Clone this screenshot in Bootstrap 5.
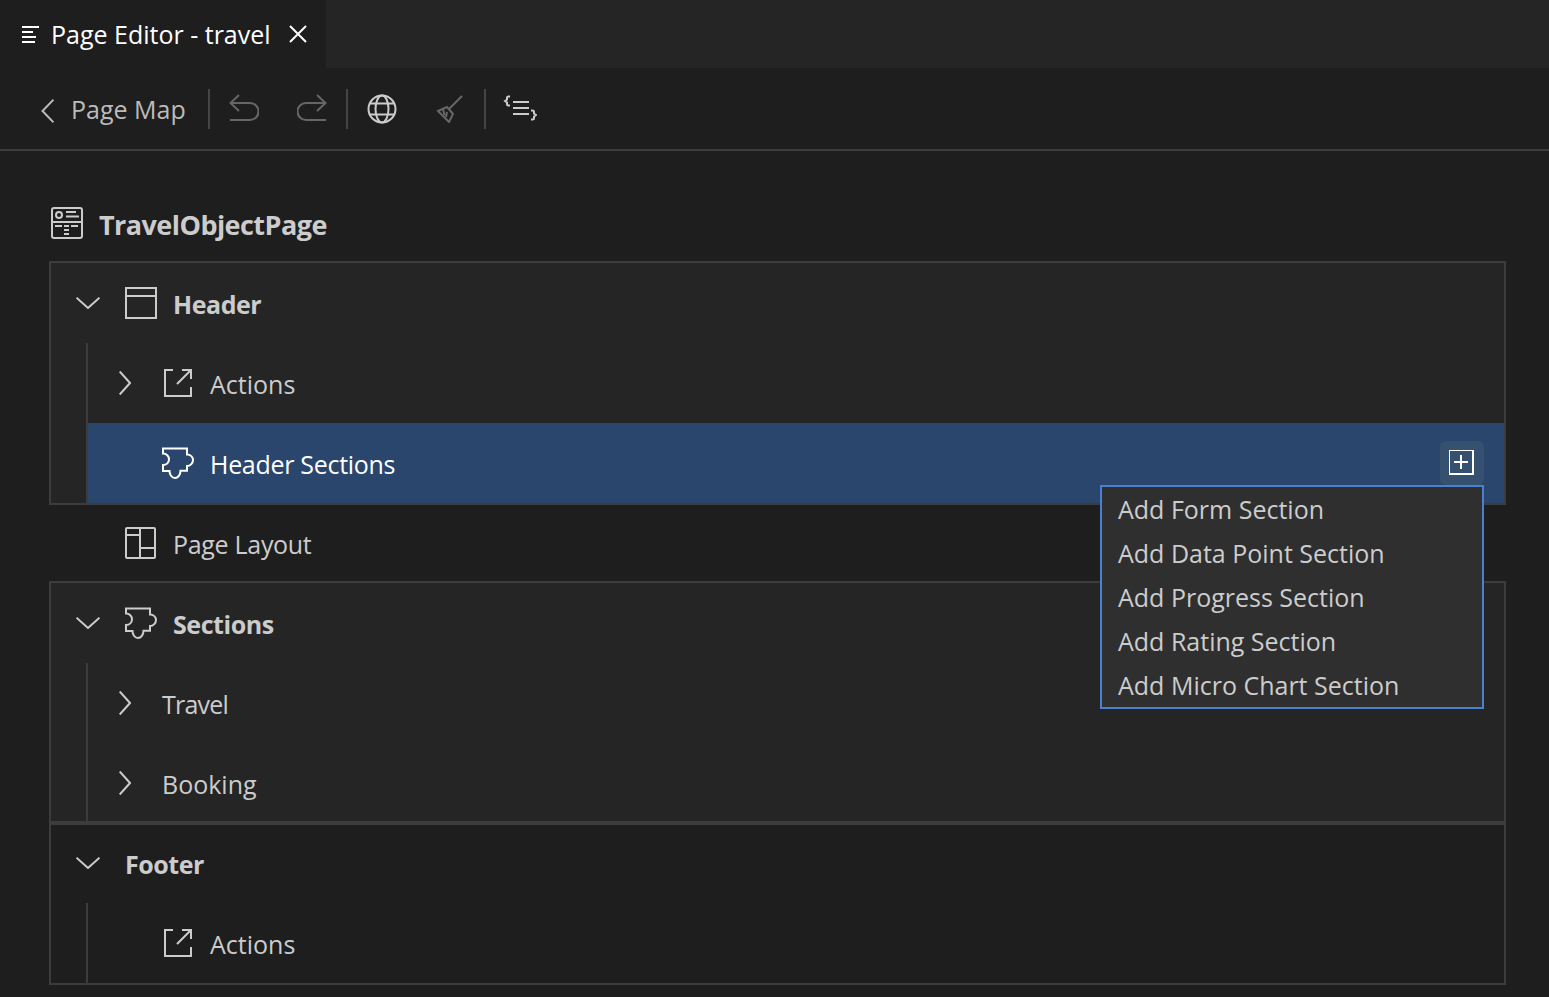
<!DOCTYPE html>
<html lang="en">

<head>
    <meta charset="UTF-8">
    <meta name="viewport" content="width=device-width, initial-scale=1.0">
    <link rel="stylesheet" href="https://cdn.jsdelivr.net/npm/bootstrap@5.3.1/dist/css/bootstrap.min.css">
    <script src="https://cdn.jsdelivr.net/npm/bootstrap@5.3.1/dist/js/bootstrap.bundle.min.js"></script>
    <title>Page Editor - travel</title>
    <style>
        body {
            background-color: #1e1e1e;
            color: #cccccc;
            font-family: "Open Sans", "Noto Sans", sans-serif;
            font-size: 25px;
            height: 997px;
            overflow: hidden;
        }

        svg {
            display: block;
            flex: none;
            fill: none;
            stroke: currentColor;
            stroke-width: 2;
        }

        .tab-strip {
            height: 68px;
            background-color: #252526;
        }

        .editor-tab {
            width: 326px;
            background-color: #1e1e1e;
            color: #ffffff;
            padding-left: 22px;
        }

        .tab-name {
            margin-left: 12px;
            padding-top: 2px;
        }

        .tab-close {
            margin-left: 18px;
        }

        .tool-strip {
            height: 83px;
            border-bottom: 2px solid #3c3c3c;
            padding-top: 21px;
            padding-bottom: 20px;
        }

        .back-link {
            width: 208px;
            padding-left: 41px;
            color: #bbbbbb;
        }

        .back-link svg {
            margin-top: 4px;
            margin-right: 17px;
        }

        .back-link span {
            padding-top: 2px;
        }

        .tool-sep {
            width: 2px;
            background-color: #454545;
        }

        .tool-btn {
            width: 68px;
            color: #cccccc;
        }

        .tool-btn.off {
            color: #666666;
        }

        .page-title {
            height: 64px;
            margin: 40px 43px 6px 51px;
            font-size: 27px;
            font-weight: 700;
            letter-spacing: -0.55px;
        }

        .page-title span {
            padding-top: 4px;
        }

        .tree-box {
            margin: 0 43px 0 49px;
            border: 2px solid #3c3c3c;
            background-color: #252526;
        }

        .tree-box.plain {
            background-color: #1e1e1e;
        }

        .tree-kids {
            margin-left: 35px;
            border-left: 2px solid #3c3c3c;
        }

        .tree-row {
            height: 80px;
        }

        .tree-row span {
            padding-top: 4px;
        }

        .tree-row.tail-row {
            height: 78px;
            padding-top: 2px;
        }

        .tree-row.first-row {
            height: 78px;
            padding-bottom: 2px;
        }

        .tree-row.layout-row {
            height: 76px;
            margin: 0 43px 0 51px;
            padding-left: 74px;
        }

        .top-row {
            padding-left: 25px;
        }

        .kid-row {
            padding-left: 31px;
        }

        .kid-row.selected {
            position: relative;
            background-color: #2a466c;
            color: #ffffff;
        }

        .bold-label {
            font-weight: 700;
            letter-spacing: -0.45px;
        }

        .snug-label {
            letter-spacing: -0.3px;
        }

        .tight-label {
            letter-spacing: -0.8px;
        }

        .twist-down {
            margin-right: 25px;
        }

        .twist-right {
            margin-right: 31px;
        }

        .twist-none {
            width: 43px;
        }

        .row-icon {
            margin-right: 16px;
        }

        .puzzle-icon {
            margin-right: 14px;
        }

        .add-btn {
            width: 44px;
            height: 44px;
            margin-right: 20px;
            border-radius: 6px;
            background-color: #36506f;
        }

        .add-menu {
            position: absolute;
            top: 62px;
            right: 20px;
            z-index: 5;
            width: 384px;
            height: 224px;
            padding-left: 16px;
            border: 2px solid #4a7fd1;
            background-color: #2f2f2f;
            color: #cccccc;
        }

        .add-menu div {
            height: 44px;
            padding-top: 2px;
        }
    </style>
</head>

<body>
    <svg width="0" height="0" class="position-absolute">
        <symbol id="chev-down" viewBox="0 0 24 12"><path d="M0.5 0.7 12 11 23.5 0.7" /></symbol>
        <symbol id="chev-right" viewBox="0 0 12 24"><path d="M0.7 0.5 11 12 0.7 23.5" /></symbol>
        <symbol id="ext-box" viewBox="0 0 32 32">
            <path d="M11 3H3v26h26v-9" />
            <path d="M15 17 29 3M20 3h9v9" />
        </symbol>
        <symbol id="puzzle" viewBox="0 0 34 34">
            <path d="M1 2.500H25v6c3.500 0 6 2.500 6 5.500s-2.500 6-6 6v4.700h-6.500c0 4-2.500 7.300-5.500 7.300s-5.500-3-5.500-7H1V19c3.500 0 6-2.500 6-5.700S4.500 7.500 1 7.500z" />
        </symbol>
    </svg>

    <div class="tab-strip d-flex">
        <div class="editor-tab d-flex align-items-center">
            <svg width="17" height="18" viewBox="0 0 17 18">
                <path d="M0 2h17M0 7h11M0 12h14M0 17h13" />
            </svg>
            <span class="tab-name">Page Editor - travel</span>
            <svg width="18" height="18" viewBox="0 0 18 18" class="tab-close">
                <path d="M1 1l16 16M17 1 1 17" />
            </svg>
        </div>
    </div>

    <div class="tool-strip d-flex">
        <div class="back-link d-flex align-items-center">
            <svg width="13" height="24" viewBox="0 0 13 24">
                <path d="M12.500 0.700 1.500 12l11 11.300" />
            </svg>
            <span>Page Map</span>
        </div>
        <div class="tool-sep"></div>
        <div class="tool-btn off d-flex align-items-center justify-content-center">
            <svg width="30" height="30" viewBox="0 0 30 30">
                <path d="M10 1 1.500 9 10 17M1.500 9H21a7.500 7.500 0 0 1 0 17H1" />
            </svg>
        </div>
        <div class="tool-btn off d-flex align-items-center justify-content-center">
            <svg width="30" height="30" viewBox="0 0 30 30">
                <path d="M20 1l8.500 8L20 17M28.500 9H9a7.500 7.500 0 0 0 0 17h20" />
            </svg>
        </div>
        <div class="tool-sep"></div>
        <div class="tool-btn d-flex align-items-center justify-content-center">
            <svg width="30" height="30" viewBox="0 0 30 30">
                <circle cx="15" cy="15" r="13.500" />
                <ellipse cx="15" cy="15" rx="6.500" ry="13.500" />
                <path d="M3 9.500h24M3 20.500h24" />
            </svg>
        </div>
        <div class="tool-btn off d-flex align-items-center justify-content-center">
            <svg width="28" height="28" viewBox="0 0 28 28">
                <path d="M26 1 13 14" />
                <path d="M2 16l9-4 6 7-4 8zM7 14l1.500 6M11 17l-1 5" />
            </svg>
        </div>
        <div class="tool-sep"></div>
        <div class="tool-btn d-flex align-items-center justify-content-center">
            <svg width="34" height="28" viewBox="0 0 34 28">
                <path d="M10 7h16M10 13h16M10 19h16" />
                <path d="M7 1.500H5.500Q4 1.500 4 3v1.500L2 6l2 1.500V9q0 1.500 1.500 1.500H7M28 15.500h1.500Q31 15.500 31 17v1.500l2 1.500-2 1.500V23q0 1.500-1.500 1.500H28" />
            </svg>
        </div>
    </div>

    <div class="page-title d-flex align-items-center">
        <svg width="32" height="32" viewBox="0 0 32 32" class="me-3">
            <rect x="1" y="1" width="30" height="30" rx="2" />
            <circle cx="8" cy="8" r="3" />
            <path d="M15 5h10M15 9.500h13M1 15h30M4 19h7M13 19h5M20 19h7M13 23h5M13 27h5" />
        </svg>
        <span>TravelObjectPage</span>
    </div>

    <div class="tree-box">
        <div class="tree-row top-row d-flex align-items-center">
            <svg width="24" height="12" class="twist-down"><use href="#chev-down" /></svg>
            <svg width="32" height="32" viewBox="0 0 32 32" class="row-icon">
                <path d="M1 1h30v30H1zM1 9h30" />
            </svg>
            <span class="bold-label">Header</span>
        </div>
        <div class="tree-kids">
            <div class="tree-row kid-row d-flex align-items-center">
                <svg width="12" height="24" class="twist-right"><use href="#chev-right" /></svg>
                <svg width="32" height="32" class="row-icon"><use href="#ext-box" /></svg>
                <span>Actions</span>
            </div>
            <div class="tree-row kid-row selected d-flex align-items-center">
                <div class="twist-none"></div>
                <svg width="34" height="34" class="puzzle-icon"><use href="#puzzle" /></svg>
                <span class="snug-label">Header Sections</span>
                <div class="add-btn ms-auto d-flex align-items-center justify-content-center">
                    <svg width="26" height="26" viewBox="1 1 26 26" class="text-white">
                        <path d="M1 1h24v24H1zM13 6v14M6 13h14" />
                    </svg>
                </div>
                <div class="add-menu">
                    <div class="d-flex align-items-center">Add Form Section</div>
                    <div class="d-flex align-items-center">Add Data Point Section</div>
                    <div class="d-flex align-items-center">Add Progress Section</div>
                    <div class="d-flex align-items-center">Add Rating Section</div>
                    <div class="d-flex align-items-center">Add Micro Chart Section</div>
                </div>
            </div>
        </div>
    </div>

    <div class="tree-row layout-row d-flex align-items-center">
        <svg width="32" height="32" viewBox="0 0 32 32" class="row-icon">
            <rect x="1" y="1" width="29" height="30" rx="1" />
            <path d="M15 1v30M1 8h14M15 21h15" />
        </svg>
        <span class="snug-label">Page Layout</span>
    </div>

    <div class="tree-box">
        <div class="tree-row top-row d-flex align-items-center">
            <svg width="24" height="12" class="twist-down"><use href="#chev-down" /></svg>
            <svg width="34" height="34" class="puzzle-icon"><use href="#puzzle" /></svg>
            <span class="bold-label">Sections</span>
        </div>
        <div class="tree-kids">
            <div class="tree-row kid-row d-flex align-items-center">
                <svg width="12" height="24" class="twist-right"><use href="#chev-right" /></svg>
                <span class="tight-label">Travel</span>
            </div>
            <div class="tree-row tail-row kid-row d-flex align-items-center">
                <svg width="12" height="24" class="twist-right"><use href="#chev-right" /></svg>
                <span>Booking</span>
            </div>
        </div>
    </div>

    <div class="tree-box plain">
        <div class="tree-row first-row top-row d-flex align-items-center">
            <svg width="24" height="12" class="twist-down"><use href="#chev-down" /></svg>
            <span class="bold-label">Footer</span>
        </div>
        <div class="tree-kids">
            <div class="tree-row kid-row d-flex align-items-center">
                <div class="twist-none"></div>
                <svg width="32" height="32" class="row-icon"><use href="#ext-box" /></svg>
                <span>Actions</span>
            </div>
        </div>
    </div>
</body>

</html>
